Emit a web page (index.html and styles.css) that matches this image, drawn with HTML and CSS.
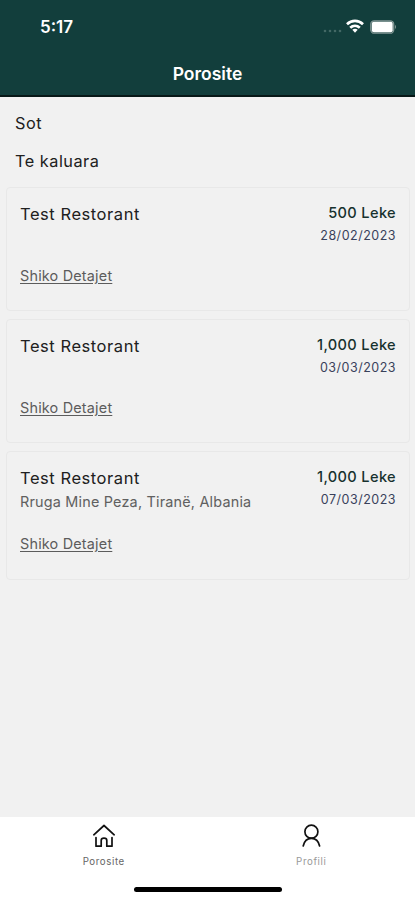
FILE: index.html
```html
<!DOCTYPE html>
<html lang="sq">
<head>
<meta charset="utf-8">
<meta name="viewport" content="width=device-width, initial-scale=1">
<title>Porosite</title>
<link rel="stylesheet" href="styles.css">
</head>
<body>
<div class="app">
  <header class="header">
    <div class="status">
      <span class="time">5:17</span>
      <div class="status-icons">
        <svg class="signal" width="19" height="4" viewBox="0 0 19 4"><g fill="#436865"><circle cx="2" cy="2" r="1.3"/><circle cx="7" cy="2" r="1.3"/><circle cx="12" cy="2" r="1.3"/><circle cx="17" cy="2" r="1.3"/></g></svg>
        <svg class="wifi" width="18" height="14" viewBox="0 0 18 14"><g fill="none" stroke="#fff" stroke-width="2.7"><path d="M1 5.2C5.6.8 12.4.8 17 5.2"/><path d="M4.2 8.7C7 6.100 11 6.100 13.800 8.700"/></g><path d="M6.300 10.800Q9 8.700 11.700 10.800L9 13.800Z" fill="#fff"/></svg>
        <svg class="battery" width="27" height="14" viewBox="0 0 27 14"><rect x=".8" y=".8" width="22.900" height="12.400" rx="3.500" fill="none" stroke="#839795" stroke-width="1.300"/><rect x="1.800" y="1.800" width="20.900" height="10.400" rx="2" fill="#fff"/><path d="M25 4.800Q27 7 25 9.200Z" fill="#839795"/></svg>
      </div>
    </div>
    <h1 class="title">Porosite</h1>
  </header>
  <main class="content">
    <h2 class="section">Sot</h2>
    <h2 class="section">Te kaluara</h2>
    <div class="orders">
      <article class="card">
        <div class="info"><h3 class="name">Test Restorant</h3><p class="address"></p><a class="details">Shiko Detajet</a></div>
        <div class="summary"><span class="price">500 Leke</span><span class="date">28/02/2023</span></div>
      </article>
      <article class="card">
        <div class="info"><h3 class="name">Test Restorant</h3><p class="address"></p><a class="details">Shiko Detajet</a></div>
        <div class="summary"><span class="price">1,000 Leke</span><span class="date">03/03/2023</span></div>
      </article>
      <article class="card tall">
        <div class="info"><h3 class="name">Test Restorant</h3><p class="address">Rruga Mine Peza, Tiranë, Albania</p><a class="details">Shiko Detajet</a></div>
        <div class="summary"><span class="price">1,000 Leke</span><span class="date">07/03/2023</span></div>
      </article>
    </div>
  </main>
  <footer class="footer">
    <nav class="tabs">
      <a class="tab active">
        <svg width="24" height="26" viewBox="0 0 24 26" fill="none" stroke="#111" stroke-width="1.700" stroke-linecap="round" stroke-linejoin="round"><path d="M1.800 11.800 12 2.500 22.200 11.800"/><path d="M4 14.500V23.200H9.200V17.500Q9.200 15.200 12 15.200T14.800 17.500V23.200H20V14.500"/></svg>
        <span>Porosite</span>
      </a>
      <a class="tab">
        <svg width="24" height="26" viewBox="0 0 24 26" fill="none" stroke="#111" stroke-width="1.700" stroke-linecap="round"><circle cx="12.400" cy="8.700" r="6.500"/><path d="M4.200 23C5.200 18.500 8 15.400 12.400 15.400S19.600 18.500 20.600 23"/></svg>
        <span>Profili</span>
      </a>
    </nav>
    <div class="home-bar"></div>
  </footer>
</div>
</body>
</html>
```
FILE: styles.css
```css
* { box-sizing: border-box; }
body, h1, h2, h3, p { margin: 0; }
body { font-family: Inter, sans-serif; background: #f1f1f1; color: #202020; }
.app { display: flex; flex-direction: column; height: 900px; }
.header { height: 97px; background: #123e3c; border-bottom: 2px solid #071817; color: #fff; }
.status { display: flex; justify-content: space-between; height: 54px; padding: 17px 18px 0 40px; }
.time { font-size: 17px; line-height: 20px; font-weight: 600; letter-spacing: 0; }
.status-icons { display: flex; align-items: flex-start; }
.signal { margin: 12px 4px 0 0; }
.wifi { margin: 2px 6px 0 0; }
.battery { margin-top: 3px; }
.title { font-size: 17.500px; line-height: 40px; font-weight: 600; letter-spacing: 0; text-align: center; }
.content { flex: 1; padding: 15px 5px 0 6px; }
.section { margin: 0 9px 16px; font-size: 16.300px; line-height: 22px; font-weight: 400; letter-spacing: .5px; }
.orders { display: flex; flex-direction: column; gap: 8px; margin-top: -1px; }
.card { display: flex; justify-content: space-between; height: 124px; padding: 15px 13px 0; border: 1px solid #e8e8e8; border-radius: 4px; }
.card.tall { height: 129px; }
.info { display: flex; flex-direction: column; }
.name { font-size: 16.500px; line-height: 22px; font-weight: 400; letter-spacing: .55px; }
.address { height: 31px; padding-top: 3px; font-size: 14.400px; line-height: 20px; letter-spacing: .2px; color: #606060; }
.tall .address { height: 35px; }
.details { align-self: flex-start; margin-top: 11px; font-size: 14.400px; line-height: 18px; letter-spacing: .2px; color: #5c5c5c; text-decoration: underline; text-underline-offset: 2px; }
.summary { display: flex; flex-direction: column; align-items: flex-end; }
.price { font-size: 14.600px; line-height: 20px; font-weight: 500; color: #17312e; letter-spacing: .35px; }
.date { margin-top: 4px; font-size: 12.500px; line-height: 18px; color: #39415b; letter-spacing: .5px; }
.footer { display: flex; flex-direction: column; height: 83px; background: #fff; }
.tabs { display: flex; height: 70px; padding-top: 6px; }
.tab { flex: 1; display: flex; flex-direction: column; align-items: center; font-size: 9.700px; line-height: 12px; letter-spacing: .6px; color: #999; }
.tab.active { color: #666; }
.tab span { margin-top: 7px; }
.home-bar { width: 148px; height: 5px; margin: 0 auto; border-radius: 3px; background: #000; }
```
